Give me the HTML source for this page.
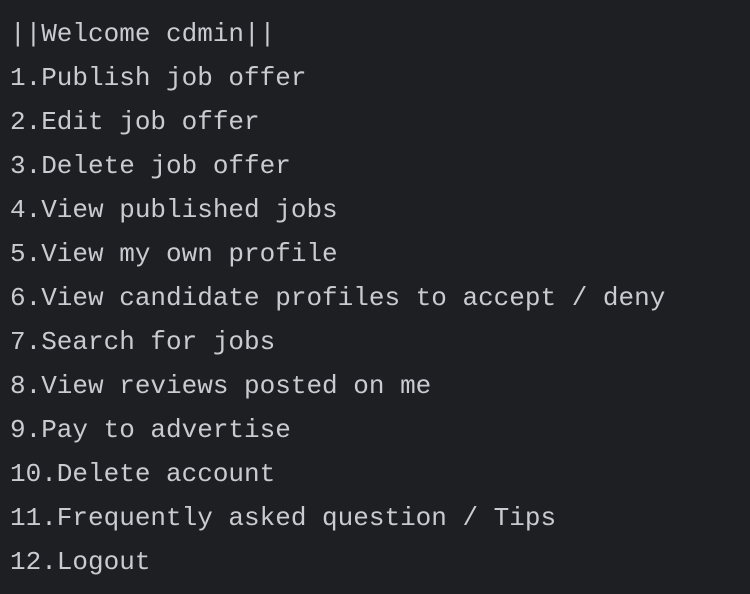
<!DOCTYPE html>
<html><head><style>
html,body{margin:0;padding:0;background:#1e1f22;width:750px;height:594px;overflow:hidden}
pre{margin:0;position:absolute;left:10px;top:12px;font-family:"Liberation Mono",monospace;font-size:26px;line-height:44px;color:#c8cbd0;letter-spacing:0}
</style></head><body><pre>||Welcome cdmin||
1.Publish job offer
2.Edit job offer
3.Delete job offer
4.View published jobs
5.View my own profile
6.View candidate profiles to accept / deny
7.Search for jobs
8.View reviews posted on me
9.Pay to advertise
10.Delete account
11.Frequently asked question / Tips
12.Logout</pre></body></html>
